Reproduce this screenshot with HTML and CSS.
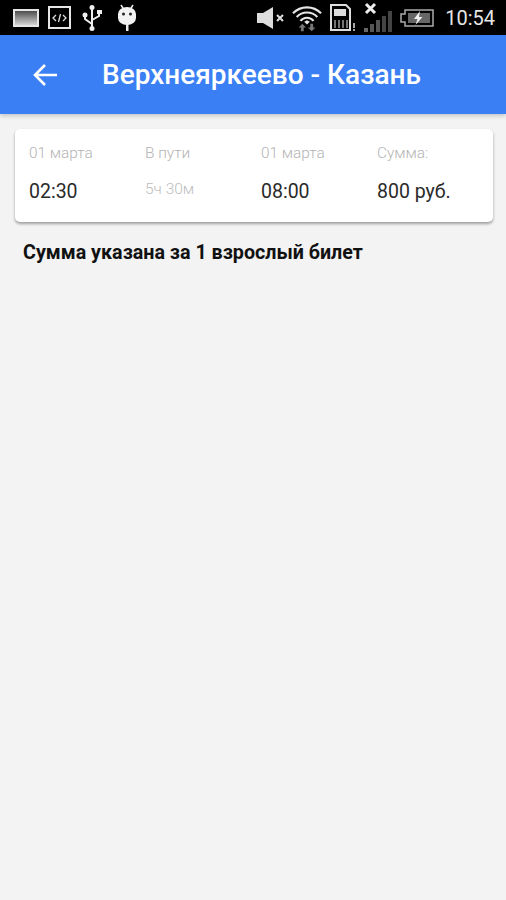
FILE: index.html
```html
<!DOCTYPE html>
<html lang="ru">

<head>
    <meta charset="UTF-8">
    <meta name="viewport" content="width=device-width, initial-scale=1.0">
    <title>Верхнеяркеево - Казань</title>
    <link rel="stylesheet" href="styles.css">
</head>

<body>
    <div class="status-bar">
        <div class="status-left">
            <svg width="28" height="20" viewBox="0 0 28 20">
                <defs>
                    <linearGradient id="pic" x1="0" y1="0" x2="0" y2="1">
                        <stop offset="0" stop-color="#444"/>
                        <stop offset="1" stop-color="#ddd"/>
                    </linearGradient>
                </defs>
                <rect x="2" y="2" width="24" height="16" fill="url(#pic)" stroke="#e6e6e6" stroke-width="2"/>
            </svg>
            <svg width="24" height="24" viewBox="0 0 24 24">
                <rect x="1" y="1" width="21" height="21" fill="none" stroke="#e6e6e6" stroke-width="2"/>
                <path d="M8 9l-3 3 3 3M15 9l3 3-3 3M12.500 8l-2 8" fill="none" stroke="#ddd" stroke-width="1.300"/>
            </svg>
            <svg width="24" height="28" viewBox="0 0 24 28">
                <path d="M12 3v22M12 20l-7-5v-3M12 16l7-4V9" fill="none" stroke="#eee" stroke-width="2"/>
                <circle cx="12" cy="3.500" r="2.500" fill="#eee"/>
                <circle cx="12" cy="24.500" r="2.500" fill="#eee"/>
                <circle cx="5" cy="11" r="2.500" fill="#eee"/>
                <rect x="17" y="6" width="5" height="4" fill="#eee"/>
            </svg>
            <svg class="android" width="22" height="28" viewBox="0 0 22 28">
                <path d="M5 1l2.500 4M17 1l-2.500 4" stroke="#eee" stroke-width="1.500"/>
                <path d="M2 10a9 7 0 0 1 18 0v4a9 7 0 0 1-18 0z" fill="#f2f2f2"/>
                <rect x="10" y="19" width="2.500" height="8" fill="#eee"/>
                <circle cx="7.500" cy="10" r="1.500" fill="#222"/>
                <circle cx="14.500" cy="10" r="1.500" fill="#222"/>
            </svg>
        </div>
        <div class="status-right">
            <svg width="30" height="24" viewBox="0 0 30 24">
                <path d="M2 7h6l10-6v22L8 17H2z" fill="#ddd"/>
                <path d="M22 9l6 6M28 9l-6 6" stroke="#ddd" stroke-width="2"/>
            </svg>
            <svg width="30" height="30" viewBox="0 0 32 30">
                <path d="M1 10a21 21 0 0 1 30 0M5 14a15 15 0 0 1 22 0M9 18a9 9 0 0 1 14 0" fill="none" stroke="#e6e6e6" stroke-width="2.200"/>
                <path d="M16 22l-3-3 3-1.500 3 1.500z" fill="#e6e6e6"/>
                <path d="M11 21l-4 4h2.500v4h3v-4H15zM21 29l4-4h-2.500v-4h-3v4H17z" fill="#777"/>
            </svg>
            <svg width="27" height="29" viewBox="0 0 27 29">
                <path d="M2 2h15l4 4v21H2z" fill="none" stroke="#ddd" stroke-width="2"/>
                <rect x="5" y="6" width="12" height="7" fill="#ddd"/>
                <path d="M6 17v8M10 17v8M14 17v8M18 17v8" stroke="#999" stroke-width="1.500"/>
                <path d="M25 20v5M25 26v2" stroke="#ddd" stroke-width="1.500"/>
            </svg>
            <svg width="30" height="32" viewBox="0 0 30 32">
                <path d="M3 2l9 9M12 2l-9 9" stroke="#eee" stroke-width="3"/>
                <path d="M1 26h4v4H1z" fill="#666"/>
                <path d="M7 22h4v8H7z" fill="#555"/>
                <path d="M13 18h4v12h-4z" fill="#555"/>
                <path d="M19 14h4v16h-4z" fill="#444"/>
                <path d="M25 9h4v21h-4z" fill="#444"/>
            </svg>
            <svg width="34" height="18" viewBox="0 0 34 18">
                <path d="M5 1h28v16H5v-4H1V5h4z" fill="none" stroke="#aaa" stroke-width="1.500"/>
                <rect x="8" y="4" width="22" height="10" fill="#666"/>
                <path d="M20 2l-6 8h3.500l-2 6 7-8h-3.500z" fill="#f0f0f0"/>
            </svg>
            <span class="clock">10:54</span>
        </div>
    </div>

    <header class="app-bar">
        <svg width="24" height="24" viewBox="0 0 24 24">
            <path d="M24 12H3M12 2L2 12l10 10" fill="none" stroke="#fff" stroke-width="2.600"/>
        </svg>
        <h1>Верхнеяркеево - Казань</h1>
    </header>

    <main class="content">
        <div class="trip-card">
            <div class="col">
                <div class="label">01 марта</div>
                <div class="value">02:30</div>
            </div>
            <div class="col">
                <div class="label">В пути</div>
                <div class="duration">5ч 30м</div>
            </div>
            <div class="col">
                <div class="label">01 марта</div>
                <div class="value">08:00</div>
            </div>
            <div class="col">
                <div class="label">Сумма:</div>
                <div class="value">800 руб.</div>
            </div>
        </div>
        <p class="note">Сумма указана за 1 взрослый билет</p>
    </main>
</body>

</html>
```

FILE: styles.css
```css
body {
    font-family: Roboto, sans-serif;
    margin: 0;
    padding: 0;
    background-color: #f3f3f3;
    width: 506px;
    height: 900px;
    overflow: hidden;
}

.status-bar {
    height: 35px;
    background-color: #000;
    display: flex;
    justify-content: space-between;
    align-items: center;
    padding: 0 11px 0 12px;
}

.status-left,
.status-right {
    display: flex;
    align-items: center;
}

.status-left svg,
.status-right svg {
    filter: blur(0.5px);
}

.status-left {
    gap: 8px;
}

.status-left .android {
    margin-left: 4px;
}

.status-right {
    gap: 7px;
}

.clock {
    color: #e6e6e6;
    font-size: 20px;
    margin-left: 4px;
}

.app-bar {
    height: 79px;
    background-color: #3b7ff5;
    display: flex;
    align-items: center;
    padding-left: 33px;
    box-shadow: 0 2px 4px rgba(0, 0, 0, 0.18);
}

.app-bar h1 {
    margin: 0 0 0 45px;
    color: #fff;
    font-size: 28px;
    font-weight: 500;
}

.content {
    padding: 15px 13px 0 15px;
}

.trip-card {
    height: 93px;
    background-color: #fff;
    border-radius: 5px;
    box-shadow: 0 2px 3px rgba(0, 0, 0, 0.35);
    display: grid;
    grid-template-columns: 116px 116px 116px 1fr;
    padding-left: 14px;
    box-sizing: border-box;
}

.label {
    color: #b4b4b4;
    font-size: 15.400px;
    font-weight: 300;
    margin-top: 16px;
    line-height: 16px;
}

.value {
    color: #2a2a2a;
    font-size: 19.500px;
    margin-top: 19px;
    line-height: 24px;
}

.duration {
    color: #bcbcbc;
    font-size: 15.500px;
    font-weight: 300;
    margin-top: 20px;
    line-height: 16px;
}

.note {
    margin: 21px 0 0 8px;
    color: #111;
    font-size: 19.700px;
    font-weight: 700;
    line-height: 20px;
}
```
